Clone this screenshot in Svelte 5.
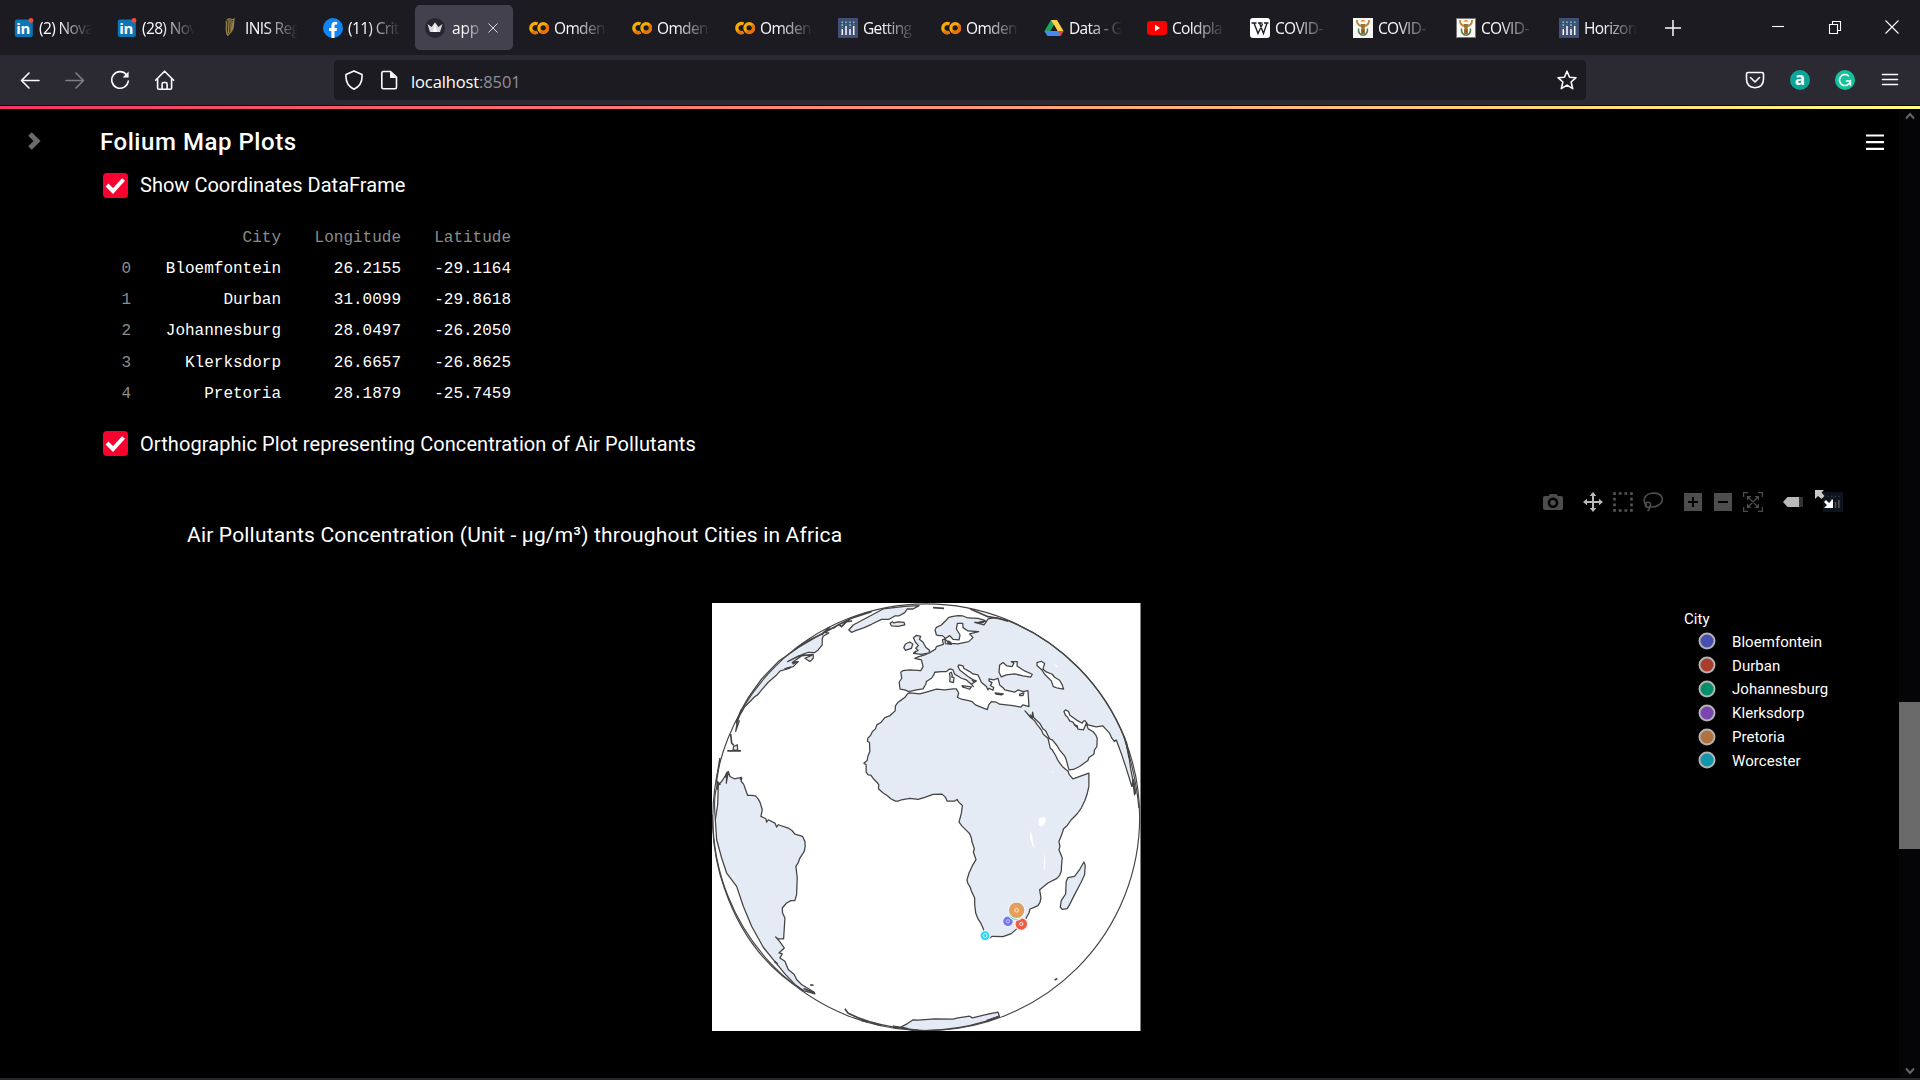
<script>
  const tabs = [
    { icon: 'linkedin', label: '(2) Nova' },
    { icon: 'linkedin', label: '(28) Nov' },
    { icon: 'harp', label: 'INIS Reg' },
    { icon: 'facebook', label: '(11) Crit' },
    { icon: 'crown', label: 'app ·', active: true },
    { icon: 'colab', label: 'Omden' },
    { icon: 'colab', label: 'Omden' },
    { icon: 'colab', label: 'Omden' },
    { icon: 'plotly', label: 'Getting' },
    { icon: 'colab', label: 'Omden' },
    { icon: 'drive', label: 'Data - G' },
    { icon: 'youtube', label: 'Coldpla' },
    { icon: 'wiki', label: 'COVID-' },
    { icon: 'crest', label: 'COVID-' },
    { icon: 'crest2', label: 'COVID-' },
    { icon: 'plotly', label: 'Horizon' }
  ];

  const rows = [
    ['Bloemfontein', '26.2155', '-29.1164'],
    ['Durban', '31.0099', '-29.8618'],
    ['Johannesburg', '28.0497', '-26.2050'],
    ['Klerksdorp', '26.6657', '-26.8625'],
    ['Pretoria', '28.1879', '-25.7459']
  ];

  const legend = [
    ['Bloemfontein', '#474fb0'],
    ['Durban', '#a93c2b'],
    ['Johannesburg', '#008f69'],
    ['Klerksdorp', '#7846ae'],
    ['Pretoria', '#b37140'],
    ['Worcester', '#1296ab']
  ];

  // Africa, Arabia and Eurasia as one outline, closed along the limb of the globe.
  const landmass =
    'M608 297L600 308L590 315L580 322L572 333L571 348L556 362L540 368L528 383L516 390L512 402L503 410L497 422L489 430L488 439L494 443L495 470L489 485L487 497L477 505L484 510L484 532L490 540L498 541L505 551L517 563L522 570L521 582L534 594L548 603L558 612L572 619L580 619L590 615L615 611L640 614L660 608L685 599L712 598L722 607L727 619L750 619L757 614L762 622L773 632L770 655L763 682L772 694L785 707L795 717L800 730L802 742L809 762L806 772L814 795L803 813L793 835L787 855L789 865L797 879L800 889L810 910L810 930L813 955L820 973L828 985L835 1000L841 1020L855 1030L863 1025L895 1026L920 1017L945 995L963 973L973 955L976 943L987 939L1000 933L1006 923L1009 910L1005 885L1030 865L1057 851L1065 842L1070 830L1071 810L1073 790L1067 775L1063 765L1066 755L1063 740L1072 718L1077 702L1088 692L1100 675L1118 657L1130 640L1141 617L1147 600L1153 575L1153 535L1105 552L1093 538L1091 530L1073 515L1060 497L1053 482L1043 465L1037 460L1030 430L1016 418L1010 405L998 390L990 378L978 368L961 348L982 371L982 365L984 352L987 368L1005 385L1015 402L1023 408L1035 432L1043 435L1057 452L1065 465L1073 475L1080 483L1085 495L1093 525L1106 524L1125 515L1150 497L1153 488L1168 478L1170 465L1177 455L1178 430L1174 421L1165 410L1151 402L1145 386L1137 405L1120 403L1118 393L1110 390L1105 382L1095 378L1089 367L1083 362L1078 350L1083 345L1092 350L1096 361L1115 375L1133 385L1137 378L1142 378L1150 390L1175 396L1195 393L1203 402L1215 415L1222 430L1230 440L1235 435L1250 475L1265 520L1282 575L1286 568L1290 600L1291 585L1278 520L1273 480L1266 450L1263 435A641 641 0 0 0 910 77L895 73L870 68L850 72L845 80L838 90L810 82L835 83L840 76L820 70L790 69L775 63L760 62L745 64L732 67L725 75L710 90L695 97L691 105L695 120L703 122L713 122L720 128L728 135L730 145L740 148L722 146L721 132L713 135L716 148L695 155L692 163L680 170L660 180L640 186L630 190L650 195L655 215L648 227L615 225L595 227L588 232L591 250L583 262L586 283L600 285L612 290L635 285L655 282L663 268L665 260L680 250L687 240L690 232L710 230L725 230L735 222L745 225L750 238L757 242L770 250L785 255L800 268L806 275L800 268L815 258L806 255L790 245L765 225L760 215L762 210L775 213L777 220L795 230L805 237L820 240L830 262L845 275L850 285L853 280L865 286L867 278L857 272L862 263L853 258L853 252L867 255L880 250L885 270L896 279L900 285L930 292L940 285L955 290L970 287L973 335L955 330L948 337L925 332L885 328L875 322L860 320L852 330L848 344L825 335L812 330L802 320L795 318L770 313L758 307L762 295L755 282L745 282L720 285L695 283L670 290L645 297L615 294Z';

  const southAmerica =
    'M40 570L50 560L60 545L66 532L64 565L70 530L75 545L88 552L110 548L109 560L116 568L122 585L128 602L140 602L152 603L160 613L165 622L172 645L168 665L183 672L185 682L190 675L210 685L215 697L220 690L250 700L262 708L270 718L293 725L300 740L301 755L298 770L285 790L280 804L273 815L277 850L275 900L270 918L258 918L245 925L232 940L233 955L240 970L238 1003L236 1033L220 1033L212 1027L225 1042L238 1060L222 1075L232 1078L225 1090L240 1100L250 1125L268 1140L275 1155L290 1170L328 1193L330 1198L312 1193L295 1188L270 1170L240 1138L205 1095L175 1058L140 995L115 935L95 875L65 835L50 790L35 735L31 675L38 630Z';

  const northAmerica =
    'M270 165L290 148L310 136L350 118L375 97L362 113L372 114L355 124L352 132L352 150L340 165L330 173L310 172L290 180L248 200L283 182L325 178L325 190L315 200L300 190L312 185L322 180L290 183L262 203L280 200L265 215L240 222L255 220L226 228L215 240L190 262L170 285L158 300L150 305L120 335L105 360L98 378L103 378L92 410L98 375L94 385L110 343L130 308L170 252L220 200Z';

  const islands = [
    // Greenland, Iceland
    'M432 105L445 90L490 66L535 42L600 34L643 32L625 42L607 42L600 53L582 63L570 63L553 73L530 73L500 88L478 98L450 108L440 112Z',
    'M556 85L563 80L567 84L580 81L598 82L600 90L580 94L560 93Z',
    // Great Britain, Ireland
    'M626 128L635 121L648 124L644 133L655 142L663 157L674 166L674 174L650 178L626 175L640 166L633 160L641 152L632 142Z',
    'M597 158L602 147L615 141L624 147L620 160L602 166Z',
    // Madagascar
    'M1138 802L1142 812L1140 840L1130 862L1110 900L1095 930L1088 942L1073 944L1067 937L1070 918L1083 898L1085 860L1090 849L1110 845L1125 825Z',
    // Antarctica
    'M565 1295L600 1300L588 1298L607 1288L625 1276L640 1277L690 1273L745 1274L760 1270L795 1265L803 1270L850 1259L880 1253L884 1265L845 1280A641 641 0 0 1 620 1307Z',
    // Mediterranean and Caribbean islands
    'M734 235L740 232L743 243L741 246L748 248L746 263L735 260L736 246Z',
    'M772 272L800 276L795 283L773 276Z',
    'M871 294L896 297L890 300L874 298Z',
    'M945 298L958 294L955 302L945 302Z',
    'M86 455L97 450L98 466L84 466Z'
  ];

  const seas = [
    'M758 85L774 85L775 98L790 108L822 110L795 117L805 128L792 140L760 147L735 145L720 132L735 122L745 133L763 135L766 120L755 102Z',
    'M885 210L895 203L907 213L922 215L928 205L920 200L938 200L937 213L960 228L983 238L978 247L955 243L930 237L905 240L890 246L883 232Z',
    'M997 212L997 203L1010 199L1020 206L1015 222L1025 231L1043 238L1050 247L1065 256L1073 270L1077 283L1060 280L1046 275L1040 258L1020 238L1012 225Z'
  ];

  const heavy =
    'M270 163L330 128L400 90L440 70L500 50M385 100L402 88L410 95L425 80L442 78M350 120L372 98M685 38L718 40M797 42L850 65L880 70L910 79M823 82L845 78M420 1243L430 1256L460 1270L490 1280L526 1292M565 1298L610 1302M316 1171L326 1172M296 1182L328 1195M1050 1156L1058 1152M845 1279L885 1265M77 418L80 445L87 452M67 468L108 468M37 585L36 560L46 570M45 490L34 560M109 345L94 382M240 222L258 216M263 207L278 200M60 547L70 537M1265 440L1274 490M1282 572L1287 555L1293 598M106 555L110 548M802 255L810 262M730 138L740 145M208 1100L218 1108M468 1277L490 1282M628 175L634 168M975 360L986 370M1110 390L1118 397';

  const arcs =
    'M31 675Q24 600 38 570M22 660Q22 780 58 880Q130 1090 295 1188M1303 640Q1296 550 1258 425M640 1307Q560 1300 500 1283';
</script>

{#snippet favicon(name)}
  <svg class="favicon" viewBox="0 0 20 20">
    {#if name === 'linkedin'}
      <rect x="0.8" y="1.5" width="18" height="17.5" rx="2" fill="#0c76b4" />
      <text x="2.2" y="16" class="in">in</text>
      <circle cx="17" cy="2.4" r="2.4" fill="#f04a3c" />
    {:else if name === 'harp'}
      <path d="M7 1c3-2 5 1 8 0-2 7 1 11-6 16H6c1-5-2-11 1-16z" fill="#3f3524" />
      <path d="M6 3c2 5-2 8 2 15M9 2l-.5 13M11 2v12M13 3l-1 9M7 2c3-3 5 1 7-1-1 6 1 10-6 16" fill="none" stroke="#94804d" stroke-width="1.200" />
    {:else if name === 'facebook'}
      <circle cx="10" cy="10" r="10" fill="#1086f5" />
      <path d="M8.4 20v-7H6v-3h2.4V7.6C8.4 5 10 3.7 12.200 3.7l2 .2v2.500h-1.200c-1.200 0-1.500.7-1.500 1.500V10h2.600l-.5 3h-2.100v7z" fill="#fff" />
    {:else if name === 'crown'}
      <circle cx="10" cy="10" r="10" fill="#262730" />
      <path d="M2.500 6l4 3L10 4.500 13.500 9l4-3-2.500 8H5z" fill="#d9d9dc" />
      <path d="M10 4.500l2 9.500H8z" fill="#fff" />
    {:else if name === 'colab'}
      <g fill="none" stroke-width="3.200">
        <path d="M8.500 5.900a4.600 4.600 0 1 0 0 8.200" stroke="#f9ab00" />
        <circle cx="14.200" cy="10" r="4.300" stroke="#f9ab00" />
        <path d="M17.300 6.900a4.300 4.300 0 0 1-6.100 6.100" stroke="#e8710a" />
        <path d="M2.800 13.200a4.500 4.500 0 0 0 5.500 1" stroke="#e8710a" />
      </g>
    {:else if name === 'plotly'}
      <rect width="20" height="20" fill="#3f4f75" />
      <path d="M4.300 11v6M12 11v6" stroke="#fff" stroke-width="1.500" />
      <path d="M8 8v9M15.700 8v9" stroke="#fff" stroke-width="1.500" />
      <path d="M4.300 3.500v6M8 3.500v3M12 3.500v6M15.700 3.500v3" stroke="#80cfbe" stroke-width="1.500" stroke-dasharray="1.600 1.200" />
    {:else if name === 'drive'}
      <path d="M7 2h6l-6 10-3.500 6L0.500 13z" fill="#1da462" />
      <path d="M7 2h6l6.500 11h-6z" fill="#ffcf48" />
      <path d="M0.500 13h19l-3 5h-13z" fill="#4688f4" />
      <path d="M10 7l-3.400 6h6.800z" fill="#1c1b22" />
      <path d="M14 13h5.500l-3 5z" fill="#ea4335" />
    {:else if name === 'youtube'}
      <rect y="3" width="20" height="14" rx="3" fill="#f00" />
      <path d="M8 6.800v6.400l5-3.200z" fill="#fff" />
    {:else if name === 'wiki'}
      <rect width="20" height="20" rx="3" fill="#fff" />
      <path d="M1.500 5h5M8 5h4.500M14 5h4.500M4 5l4 10.500L12.500 6M9.500 5l4 10.500L17 5" fill="none" stroke="#222" stroke-width="1.400" />
    {:else}
      <rect width="20" height="20" fill="#faf8f2" />
      <path d="M4 2c-.5 4 2 5 3.500 6h5C14 7 16.500 6 16 2" fill="none" stroke="#b5853a" stroke-width="1.700" />
      <path d="M7.500 3.500c.5-2 4.500-2 5 0z" fill="#f08030" />
      <path d="M7.500 6h5l-1 5h-3z" fill="#9a7433" />
      <path d="M5.500 10.500c-1 9 10 9 9 0" fill="none" stroke="#4a7d50" stroke-width="1.500" />
      <path d="M8 11h4v5H8z" fill="#a0702c" />
      <path d="M9 12.500h2v2H9z" fill="#b03a2c" />
      {#if name === 'crest2'}<rect x=".5" y=".5" width="19" height="19" fill="none" stroke="#77767c" />{/if}
    {/if}
  </svg>
{/snippet}

{#snippet checkbox(label, width)}
  <div class="check">
    <svg viewBox="0 0 25 25"><rect width="25" height="25" rx="4" class="red" /><path d="M4 12l6 6L20.500 6.500" fill="none" stroke="#fff" stroke-width="4" /></svg>
    <span class={width}>{label}</span>
  </div>
{/snippet}

<div class="screen">
  <div class="tabs">
    {#each tabs as tab}
      <div class="tab" class:active={tab.active}>
        {@render favicon(tab.icon)}
        <span class="label">{tab.label}</span>
        {#if tab.active}
          <svg class="close" viewBox="0 0 10 10"><path d="M.5.5l9 9M9.500.5l-9 9" /></svg>
        {/if}
      </div>
    {/each}
    <svg class="plus" viewBox="0 0 16 16"><path d="M8 0v16M0 8h16" /></svg>
    <div class="window">
      <svg viewBox="0 0 14 14"><path d="M1 6.500h12" /></svg>
      <svg viewBox="0 0 14 14"><path d="M1.500 4.500h8v9h-8zM4.500 4.500v-3h8v9h-3" /></svg>
      <svg viewBox="0 0 14 14"><path d="M.5.5l13 13M13.500.5l-13 13" /></svg>
    </div>
  </div>

  <div class="toolbar">
    <div class="nav">
      <svg viewBox="0 0 20 20"><path d="M19 10.500H2M9 3L1.500 10.500 9 18" /></svg>
      <svg class="dim" viewBox="0 0 20 20"><path d="M1 10.500h17M11 3l7.500 7.500L11 18" /></svg>
      <svg viewBox="0 0 20 20"><path d="M16.500 4.700A8.300 8.300 0 1 0 18.300 11" /><path d="M18.600 1.500v6h-6z" fill="#fbfbfe" stroke="none" /></svg>
      <svg viewBox="0 0 20 20"><path d="M.6 10.200L9.600 1.200l9 9M2.600 8.500V18q0 1.200 1.200 1.200h11.600q1.200 0 1.200-1.200V8.500M7.100 19v-5q0-1.500 1.500-1.500h2q1.500 0 1.500 1.500v5" /></svg>
    </div>
    <div class="address">
      <svg viewBox="0 0 20 20"><path d="M10 .9L18 4.500C18.600 12 16 16.500 10 19.200 4 16.500 1.400 12 2 4.500z" /></svg>
      <svg viewBox="0 0 20 20"><path d="M4.500 1.500h7L17.500 7v10q0 1.700-1.700 1.700H4.500q-1.700 0-1.700-1.700V3.200q0-1.700 1.700-1.700z" /><path d="M11 1.500V8h6.500z" fill="#fbfbfe" stroke="none" /></svg>
      <span class="url">localhost<i>:8501</i></span>
      <svg class="star" viewBox="0 0 20 20"><path d="M10 1.200l2.600 6 6.400.5-4.900 4.300 1.600 6.600-5.700-3.500-5.700 3.500 1.600-6.600L1 7.700l6.400-.5z" /></svg>
    </div>
    <div class="extensions">
      <svg viewBox="0 0 20 20"><path d="M3 2.500h14q1.500 0 1.500 1.500v5q0 8-8.500 8.800Q1.500 17 1.500 9V4q0-1.500 1.500-1.500zM5.500 7.500L10 12l4.500-4.500" /></svg>
      <div class="badge teal">a</div>
      <div class="badge green"><svg viewBox="0 0 20 20"><path d="M13.500 5.800A5.500 5.500 0 1 0 15.400 11h-4M15.400 10.500V15" /></svg></div>
      <svg class="burger" viewBox="0 0 20 20"><path d="M2.500 4.500h15M2.500 9.500h15M2.500 14.500h15" /></svg>
    </div>
  </div>
  <div class="accent"></div>

  <div class="body">
    <main>
      <header>
        <svg class="chevron" viewBox="0 0 14 18"><path d="M3 2l7 7-7 7" /></svg>
        <h3>Folium Map Plots</h3>
        <svg class="menu" viewBox="0 0 18 16"><path d="M0 1.500h18M0 8.200h18M0 14.800h18" /></svg>
      </header>

      {@render checkbox('Show Coordinates DataFrame', 'short')}

      <table>
        <thead>
          <tr><th></th><th>City</th><th>Longitude</th><th>Latitude</th></tr>
        </thead>
        <tbody>
          {#each rows as [city, lon, lat], i}
            <tr><th>{i}</th><td>{city}</td><td>{lon}</td><td>{lat}</td></tr>
          {/each}
        </tbody>
      </table>

      {@render checkbox('Orthographic Plot representing Concentration of Air Pollutants', 'long')}

      <section class="chart">
        <div class="modebar">
          <div class="group">
            <svg viewBox="0 0 20 20"><path fill-rule="evenodd" fill="#4d4d4d" d="M2 4h3.500L7 2h6.500L15 4h3q2 0 2 2v10q0 2-2 2H2q-2 0-2-2V6q0-2 2-2zM10 5.500a5.300 5.300 0 1 0 .01 0zM10 8a2.800 2.800 0 1 1-.01 0z" /></svg>
          </div>
          <div class="group">
            <svg viewBox="0 0 20 20"><path fill="#b9b9b9" d="M10 0l3.300 4H11v5h5V6.700l4 3.300-4 3.300V11h-5v5h2.300L10 20l-3.300-4H9v-5H4v2.300L0 10l4-3.300V9h5V4H6.700z" /></svg>
            <svg viewBox="0 0 20 20"><rect x="1.500" y="1.500" width="17" height="17" fill="none" stroke="#555" stroke-width="2.600" stroke-dasharray="2.800 2.867" stroke-dashoffset="1.400" /></svg>
            <svg viewBox="0 0 20 20"><g fill="none" stroke="#4d4d4d" stroke-width="1.600"><path d="M4 13.500C-1 10 1 2.500 8.500 1.300 15 .3 19.500 3.300 19.300 7.500 19 12.500 12 16 7 14.600" /><circle cx="5" cy="12.800" r="2.600" /><path d="M6.500 14.500q.7 2.500-2 4.500" /></g></svg>
          </div>
          <div class="group">
            <svg viewBox="0 0 20 20"><path fill="#4d4d4d" fill-rule="evenodd" d="M1 1h18v18H1zM9 5v4H5v2h4v4h2v-4h4V9h-4V5z" /></svg>
            <svg viewBox="0 0 20 20"><path fill="#4d4d4d" fill-rule="evenodd" d="M1 1h18v18H1zM5 9v2h10V9z" /></svg>
            <svg viewBox="0 0 20 20"><path d="M.6 5V.6H5M15 .6h4.400V5M19.400 15v4.400H15M5 19.400H.6V15M5 5l10 10M15 5L5 15" fill="none" stroke="#4d4d4d" stroke-width="1.300" /><path fill="#4d4d4d" d="M4 4h4.500L4 8.500zM16 4v4.500L11.500 4zM4 16v-4.500L8.500 16zM16 16h-4.500l4.500-4.500z" /></svg>
          </div>
          <div class="group">
            <svg viewBox="0 0 20 20"><path fill="#b9b9b9" d="M0 10l4.500-5H16v10H4.500z" /><path fill="#333" d="M16 5h4v10h-4z" /></svg>
          </div>
          <div class="group logo">
            <svg viewBox="0 0 20 20"><rect width="20" height="20" fill="#0e131e" /><path d="M4.500 4.500h12" stroke="#2c3c38" stroke-width="1.400" stroke-dasharray="1.500 2" /><path d="M8.500 7v9M12.500 10v6M15.800 8v8" stroke="#56585c" stroke-width="1.500" /></svg>
            <svg class="expand" viewBox="0 0 20 20"><path fill="#c9c9c9" d="M0 0h9L6.500 2.500 9.500 6 6.500 9 3 6 0 9z" /><path fill="#fff" d="M18 9v9H9l3-3-3-3 2-2 3 3z" /></svg>
          </div>
        </div>

        <h4>Air Pollutants Concentration (Unit - μg/m³) throughout Cities in Africa</h4>

        <div class="plot">
          <svg class="globe" viewBox="21 24 1287 1287">
            <rect x="21" y="24" width="1287" height="1287" fill="#fff" />
            <g class="land">
              <path d={landmass} />
              <path d={southAmerica} />
              <path d={northAmerica} />
              {#each islands as d}<path {d} />{/each}
            </g>
            <g class="sea">{#each seas as d}<path {d} />{/each}</g>
            <path class="lake" d="M1003 672L1018 666L1023 672L1020 687L1010 696L1001 691ZM978 709L983 722L984 740L990 762L983 752L976 728ZM1019 775L1022 800L1020 825L1017 824ZM1045 205L1060 214L1056 218ZM1089 202L1098 210ZM820 106L834 98L823 105ZM83 840L90 844L88 850ZM1042 530l4 1l-1 4l-4 -1Z" />
            <circle class="limb" cx="664.500" cy="667.500" r="641" />
            <path class="coast" d={arcs} />
            <path class="heavy" d={heavy} />
            <g stroke="#f1f3f9" stroke-width="3.500">
              <circle cx="910" cy="980" r="16" fill="#6f74f5" />
              <circle cx="950" cy="988" r="19" fill="#ef5b45" />
              <circle cx="934" cy="953" r="24" fill="#35cba3" />
              <circle cx="936" cy="947" r="25" fill="#d2a765" />
              <circle cx="936" cy="947" r="17" fill="#f09c56" stroke="#d9a263" />
              <circle cx="841" cy="1023" r="15" fill="#2fd4f0" />
            </g>
            <g fill="none" stroke="#ffe9dd" stroke-width="3">
              <circle cx="936" cy="947" r="5.500" /><circle cx="910" cy="980" r="5" stroke="#c6c8ff" /><circle cx="950" cy="988" r="5" /><circle cx="841" cy="1023" r="6" stroke="#c9f7ff" />
            </g>
          </svg>
          <div class="legend">
            <div class="heading">City</div>
            {#each legend as [name, colour]}
              <div class="entry">
                <svg viewBox="0 0 18 18"><circle cx="9" cy="9" r="7.500" fill={colour} stroke="#b2b2b2" stroke-width="2" /></svg>
                <span>{name}</span>
              </div>
            {/each}
          </div>
        </div>
      </section>
    </main>
    <aside class="scroll">
      <svg viewBox="0 0 10 8"><path d="M1 6.500l4-4.500 4 4.500" /></svg>
      <div class="thumb"></div>
      <svg class="down" viewBox="0 0 10 8"><path d="M1 1.500L5 6l4-4.500" /></svg>
    </aside>
  </div>
  <footer></footer>
</div>

<style>
  :global(body) { margin: 0; background: #000; }
  * { box-sizing: border-box; }
  svg { display: block; flex: none; }
  .screen { width: 1920px; height: 1080px; display: flex; flex-direction: column; overflow: hidden; background: #000; color: #fff; font-family: Roboto, "Open Sans", sans-serif; }

  .tabs { height: 55px; flex: none; display: flex; align-items: center; background: #1c1b22; padding-left: 3px; font: 15.5px "Open Sans", "Noto Sans", sans-serif; color: #fbfbfe; }
  .tab { width: 98px; height: 45px; margin-right: 5px; padding-left: 11px; display: flex; align-items: center; border-radius: 5px; }
  .active { background: #42414d; padding-left: 10px; }
  .favicon { width: 20px; height: 20px; }
  .in { font: bold 15px "Open Sans", sans-serif; fill: #fff; letter-spacing: -0.3px; }
  .label { width: 54px; margin-left: 5px; overflow: hidden; white-space: nowrap; letter-spacing: -0.65px; -webkit-mask-image: linear-gradient(90deg, #000 35%, transparent 98%); mask-image: linear-gradient(90deg, #000 35%, transparent 98%); }
  .active .label { width: 34px; margin-left: 7px; letter-spacing: -0.2px; }
  .close { width: 10px; height: 10px; margin-left: 2px; stroke: #d8d8dd; fill: none; }
  .plus { width: 16px; height: 16px; margin-left: 14px; stroke: #fbfbfe; stroke-width: 1.5; }
  .window { margin-left: auto; padding: 0 21px 2px 0; display: flex; gap: 43px; }
  .window svg { width: 14px; height: 14px; fill: none; stroke: #fff; stroke-width: 1.1; }

  .toolbar { height: 50px; flex: none; display: flex; align-items: center; background: #2b2a33; }
  .toolbar svg { width: 20px; height: 20px; fill: none; stroke: #fbfbfe; stroke-width: 1.6; stroke-linejoin: round; stroke-linecap: round; }
  .nav { width: 334px; padding-left: 20px; display: flex; gap: 25px; }
  .nav .dim { opacity: 0.4; }
  .address { width: 1252px; height: 40px; background: #1c1b22; border-radius: 4px; display: flex; align-items: center; padding: 0 9px 0 10px; gap: 15px; }
  .url { font: 16.5px "Open Sans", sans-serif; letter-spacing: -0.12px; padding-top: 2px; margin-left: -3px; }
  .url i { font-style: normal; color: #8f8f97; }
  .toolbar .star { margin-left: auto; }
  .extensions { margin-left: auto; padding-right: 20px; display: flex; gap: 25px; }
  .badge { width: 20px; height: 20px; border-radius: 50%; display: flex; align-items: center; justify-content: center; font: bold 17px/17px "Open Sans", sans-serif; padding-bottom: 3px; }
  .teal { background: #0ba595; }
  .green { background: #15c39a; padding: 0; }
  .accent { height: 4px; flex: none; border-top: 1px solid #0c0c0f; background: linear-gradient(90deg, #f63366, #ff7a6e 35%, #fffd80); }

  .body { flex: 1; min-height: 0; display: flex; }
  main { width: 1899px; }
  header { height: 62px; padding: 0 15px 0 27px; display: flex; align-items: center; }
  .chevron { width: 14px; height: 18px; margin-top: 2px; fill: none; stroke: #6b6b6b; stroke-width: 5; }
  h3 { margin: 3px 0 0 59px; font-size: 24px; font-weight: 500; letter-spacing: 0.55px; }
  .menu { width: 18px; height: 16px; margin: 4px 0 0 auto; stroke: #fff; stroke-width: 2.2; }

  .check { height: 28px; margin-left: 103px; display: flex; align-items: center; gap: 12px; font-size: 20px; }
  .check svg { width: 25px; height: 25px; }
  .red { fill: #f7012f; }
  .short { letter-spacing: 0.02px; }
  .long { letter-spacing: 0.08px; }

  table { margin: 23px 0 20px 103px; border-collapse: collapse; font: 16px/20px "Liberation Mono", monospace; }
  th, td { padding: 5.640px 0 5.640px; font-weight: 400; text-align: right; }
  th { color: #8c8c8c; }
  th:nth-child(1) { width: 28px; }
  th:nth-child(2), td:nth-child(2) { width: 150px; }
  th:nth-child(3), td:nth-child(3) { width: 120px; }
  th:nth-child(4), td:nth-child(4) { width: 110px; }

  .chart { padding-top: 34px; }
  .modebar { display: flex; justify-content: flex-end; gap: 20px; padding-right: 56px; }
  .group { display: flex; gap: 10px; position: relative; }
  .group svg { width: 20px; height: 20px; }
  .group .expand { position: absolute; left: -8px; top: -2px; }
  h4 { margin: 10px 0 0 187px; font-size: 21px; line-height: 26px; font-weight: 400; letter-spacing: 0.18px; }
  .plot { margin-top: 55px; padding-left: 712px; display: flex; }
  .globe { width: 428.500px; height: 428.500px; }
  .land path { fill: #e5ebf5; stroke: #444; stroke-width: 3.800; stroke-linejoin: round; }
  .sea path { fill: #fff; stroke: #444; stroke-width: 3.800; stroke-linejoin: round; }
  .lake { fill: #fff; }
  .limb, .coast { fill: none; stroke: #444; stroke-width: 3.500; }
  .heavy { fill: none; stroke: #444; stroke-width: 5; stroke-linejoin: round; }
  .legend { margin-left: 543.500px; padding-top: 6px; font-size: 15px; letter-spacing: 0.05px; }
  .heading { height: 21px; line-height: 20px; }
  .entry { height: 23.800px; display: flex; align-items: center; padding-left: 14px; }
  .entry span { padding-top: 1px; }
  .entry svg { width: 18px; height: 18px; margin-right: 16px; }

  .scroll { width: 21px; background: #050507; display: flex; flex-direction: column; align-items: center; padding: 3px 0; }
  .scroll svg { width: 10px; height: 8px; fill: none; stroke: #666; stroke-width: 2; }
  .thumb { width: 21px; height: 147px; margin-top: 582px; background: #696969; }
  .scroll .down { margin-top: auto; }
  footer { height: 2px; flex: none; background: #262628; }
</style>
